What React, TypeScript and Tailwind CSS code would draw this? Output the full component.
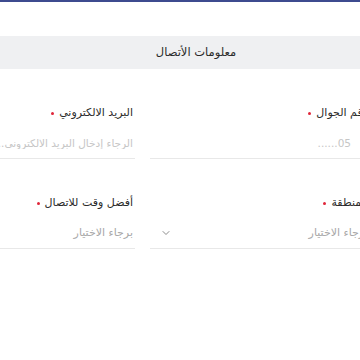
import { ChevronDown } from "lucide-react";

function FieldLabel({ text }: { text: string }) {
  return (
    <label className="flex h-4 items-center gap-[5px] pr-[2px] text-[11px] leading-4 text-[#2b2b2b]">
      <span>{text}</span>
      <span className="h-[3px] w-[3px] rounded-full bg-[#e0263a]" />
    </label>
  );
}

function TextField({ label, placeholder, inset = "" }: { label: string; placeholder: string; inset?: string }) {
  return (
    <div className="flex flex-col">
      <FieldLabel text={label} />
      <input
        dir="rtl"
        placeholder={placeholder}
        className={`mt-[7px] h-[31px] w-full text-ellipsis border-b border-[#e8e8e8] bg-transparent pr-[2px] text-[10.5px] outline-none placeholder:text-[#c6c6c6] ${inset}`}
      />
    </div>
  );
}

function SelectField({ label }: { label: string }) {
  return (
    <div className="flex flex-col">
      <FieldLabel text={label} />
      <button
        type="button"
        className="mt-[7px] flex h-[31px] w-full items-center justify-between border-b border-[#e8e8e8] pl-[10px] pr-[2px] text-[11px] text-[#a8a8a8]"
      >
        <span>برجاء الاختيار</span>
        <ChevronDown className="h-3 w-3 text-[#7a7a7a]" strokeWidth={1.75} />
      </button>
    </div>
  );
}

export default function App() {
  return (
    <div className="h-[360px] w-[360px] overflow-hidden bg-white font-['DejaVu_Sans',sans-serif]">
      <div className="h-[2px] bg-[#3d4b8f]" />

      <div className="mt-[34px] flex h-[33px] items-center justify-center bg-[#eff0f2] pl-[32px]">
        <h2 dir="rtl" className="text-[11.5px] font-normal text-[#2a2a2a]">
          معلومات الأتصال
        </h2>
      </div>

      <div dir="rtl" className="ml-[-85px] mt-[36px] grid w-[455px] grid-cols-2 gap-x-[15px] gap-y-[36px]">
        <TextField label="رقم الجوال" placeholder="05......" inset="pr-[19px]" />
        <TextField label="البريد الالكتروني" placeholder="الرجاء إدخال البريد الالكتروني..." />
        <SelectField label="المنطقة" />
        <SelectField label="أفضل وقت للاتصال" />
      </div>
    </div>
  );
}
